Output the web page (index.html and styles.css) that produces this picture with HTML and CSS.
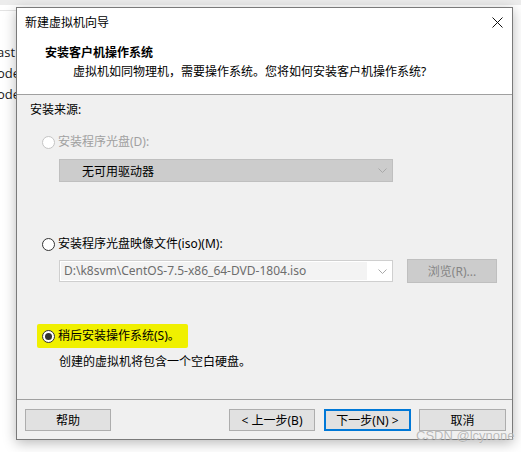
FILE: index.html
```html
<!DOCTYPE html>
<html>
<head>
<meta charset="utf-8">
<link rel="stylesheet" href="styles.css">
</head>
<body>
<div class="desktop">
  <div class="topband"></div>
  <div class="bgline"></div>
  <div class="bgtext">
    <div class="bgrow r1">ast</div>
    <div class="bgrow">ode</div>
    <div class="bgrow">ode</div>
  </div>

  <div class="window">
    <div class="header">
      <div class="titlebar">
        <span class="title">新建虚拟机向导</span>
        <svg class="close" width="11" height="11" viewBox="0 0 11 11"><path d="M0.5 0.5 L10.5 10.5 M10.5 0.5 L0.5 10.5" stroke="#111" stroke-width="1" fill="none"/></svg>
      </div>
      <div class="heading">安装客户机操作系统</div>
      <div class="subheading">虚拟机如同物理机，需要操作系统。您将如何安装客户机操作系统?</div>
    </div>

    <div class="content">
      <div class="label">安装来源:</div>

      <div class="radio-row disabled r-first">
        <span class="radio"></span><span>安装程序光盘(D):</span>
      </div>
      <div class="combo combo-disabled">
        <span class="combo-text">无可用驱动器</span>
        <svg class="chev" width="9" height="5" viewBox="0 0 9 5"><polyline points="0.5,0.5 4.5,4.5 8.5,0.5" fill="none" stroke="#a8a8a8" stroke-width="1"/></svg>
      </div>

      <div class="radio-row r-second">
        <span class="radio"></span><span>安装程序光盘映像文件(iso)(M):</span>
      </div>
      <div class="iso-row">
        <div class="combo combo-iso">
          <span class="iso-text">D:\k8svm\CentOS-7.5-x86_64-DVD-1804.iso</span>
          <svg class="chev" width="9" height="5" viewBox="0 0 9 5"><polyline points="0.5,0.5 4.5,4.5 8.5,0.5" fill="none" stroke="#a8a8a8" stroke-width="1"/></svg>
        </div>
        <div class="browse">浏览(R)...</div>
      </div>

      <div class="radio-row r-third">
        <span class="hl"><span class="radio checked"></span><span>稍后安装操作系统(S)。</span></span>
      </div>
      <div class="desc">创建的虚拟机将包含一个空白硬盘。</div>
    </div>

    <div class="footer">
      <div class="btn">帮助</div>
      <div class="btn-group">
        <div class="btn">&lt; 上一步(B)</div>
        <div class="btn primary">下一步(N) &gt;</div>
        <div class="btn">取消</div>
      </div>
    </div>
  </div>

  <div class="watermark">CSDN @lcynone</div>
</div>
</body>
</html>
```

FILE: styles.css
```css
* { box-sizing: border-box; }
html, body {
  margin: 0;
  padding: 0;
  background: #ffffff;
  width: 521px;
  height: 452px;
  overflow: hidden;
}
body {
  font-family: "Noto Sans", "Noto Sans CJK SC", sans-serif;
  font-size: 12px;
  color: #000;
}
.desktop {
  position: relative;
  width: 521px;
  height: 452px;
  background: #fff;
}
.topband {
  height: 5px;
  background: #ececec;
}
.bgline {
  position: absolute;
  left: 0;
  top: 10px;
  width: 30px;
  height: 1px;
  background: #e3e3e3;
}
.bgtext {
  position: absolute;
  left: -3px;
  top: 43px;
  font-family: "Open Sans", "Noto Sans", sans-serif;
  font-size: 13px;
  color: #1a1a1a;
}
.bgrow { height: 21px; line-height: 18px; }

.window {
  position: absolute;
  left: 16px;
  top: 7px;
  width: 497px;
  height: 433px;
  border: 1px solid #7a7a7a;
  background: #f0f0f0;
  box-shadow: 0 3px 12px rgba(0,0,0,0.28);
  display: flex;
  flex-direction: column;
}
.header {
  background: #fff;
  height: 87px;
  border-bottom: 1px solid #a0a0a0;
  flex: none;
}
.titlebar {
  height: 28px;
  display: flex;
  align-items: center;
  justify-content: space-between;
  padding: 0 9px 0 8px;
}
.title { line-height: 18px; padding-top: 1px; }
.close { display: block; }
.heading {
  margin-top: 8px;
  margin-left: 28px;
  line-height: 18px;
  font-weight: bold;
}
.subheading {
  margin-top: 1px;
  margin-left: 56px;
  line-height: 18px;
}

.content {
  height: 304px;
  flex: none;
  padding: 6px 0 0 0;
}
.label {
  margin-left: 13px;
  line-height: 18px;
}
.radio-row {
  display: flex;
  align-items: center;
  margin-left: 25px;
  line-height: 18px;
  height: 18px;
}
.r-first { margin-top: 14px; }
.r-second { margin-top: 53px; }
.r-third { margin-top: 44px; }
.radio {
  width: 13px;
  height: 13px;
  border-radius: 50%;
  border: 1px solid #333;
  background: #fff;
  margin-right: 3px;
  flex: none;
  position: relative;
}
.disabled { color: #a0a0a0; }
.disabled .radio { border-color: #c4c4c4; }
.radio.checked::after {
  content: "";
  position: absolute;
  left: 2px;
  top: 2px;
  width: 7px;
  height: 7px;
  border-radius: 50%;
  background: #333;
}
.hl {
  display: inline-flex;
  align-items: center;
  background: #f0f000;
  margin-left: -5px;
  padding: 3px 8px 3px 5px;
  border-radius: 2px;
}

.combo {
  margin-left: 42px;
  width: 334px;
  height: 23px;
  display: flex;
  align-items: center;
  justify-content: space-between;
}
.combo-disabled {
  margin-top: 8px;
  background: #cccccc;
  border: 1px solid #bfbfbf;
  padding: 0 5px 0 22px;
}
.chev { display: block; flex: none; }
.iso-row {
  display: flex;
  align-items: center;
  margin-top: 6px;
}
.combo-iso {
  height: 22px;
  background: #fff;
  border: 1px solid #cfcfcf;
  padding: 1px 5px 1px 1px;
}
.iso-text {
  flex: 1;
  height: 18px;
  line-height: 18px;
  background: #f3f3f3;
  padding-left: 3px;
  color: #6d6d6d;
  margin-right: 11px;
  white-space: nowrap;
  overflow: hidden;
}
.browse {
  margin-left: 14px;
  width: 90px;
  height: 24px;
  background: #cccccc;
  border: 1px solid #bfbfbf;
  color: #858585;
  display: flex;
  align-items: center;
  justify-content: center;
}
.desc {
  margin-top: 8px;
  margin-left: 42px;
  line-height: 18px;
}

.footer {
  flex: none;
  height: 40px;
  border-top: 1px solid #a0a0a0;
  display: flex;
  align-items: flex-start;
  padding: 9px 6px 0 8px;
}
.btn-group {
  margin-left: auto;
  display: flex;
  gap: 9px;
}
.btn {
  width: 86px;
  height: 22px;
  background: #e1e1e1;
  border: 1px solid #adadad;
  display: flex;
  align-items: center;
  justify-content: center;
}
.btn-group .btn:last-child { width: 87px; margin-left: -1px; }
.btn.primary {
  width: 87px;
  border: 2px solid #0078d7;
}

.watermark {
  position: absolute;
  left: 416px;
  top: 428px;
  white-space: nowrap;
  font-family: "Liberation Sans", sans-serif;
  font-size: 13px;
  line-height: 16px;
  color: rgba(140,140,140,0.6);
  text-shadow: 0 0 1px rgba(255,255,255,0.8);
}
```
